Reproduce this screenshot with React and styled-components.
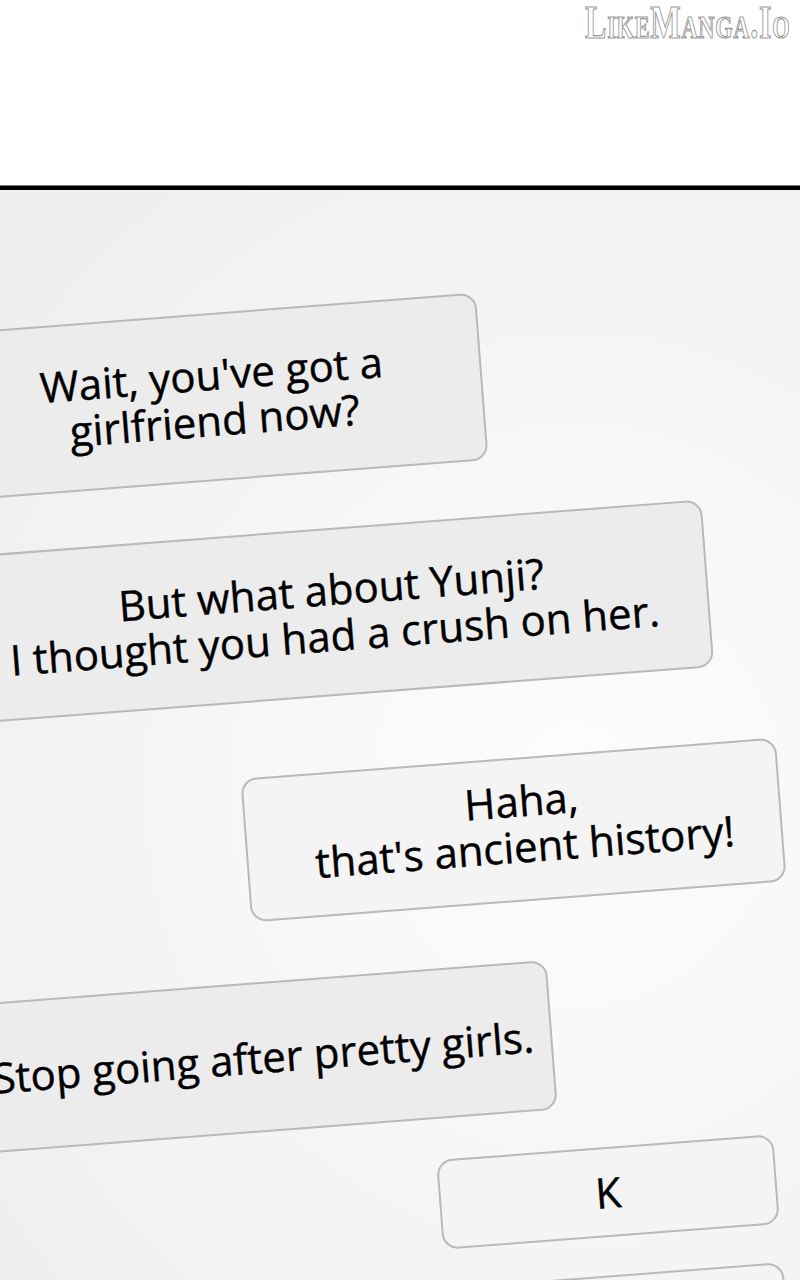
import React from "react";
import styled, { createGlobalStyle } from "styled-components";

const GlobalStyle = createGlobalStyle`
  html, body {
    margin: 0;
    padding: 0;
    background: #ffffff;
  }
  body {
    font-family: "Open Sans", "Noto Sans", sans-serif;
  }
`;

const messages = [
  { id: 1, text: ["Wait, you've got a", "girlfriend now?"], left: -57, top: 123, w: 540, h: 168, tone: "dark" },
  { id: 2, text: ["But what about Yunji?", "I thought you had a crush on her."], left: -43, top: 47, w: 752, h: 168, tone: "dark" },
  { id: 3, text: ["Haha,", "that's ancient history!"], left: 245, top: 62, w: 537, h: 144, tone: "light", shift: 20 },
  { id: 4, text: ["Stop going after pretty girls."], left: -27, top: 80, w: 580, h: 150, tone: "dark" },
  { id: 5, text: ["K"], left: 439, top: 15, w: 338, h: 90, tone: "light" },
  { id: 6, text: [""], left: 447, top: 38, w: 340, h: 90, tone: "light" },
];

const App = () => {
  return (
    <Page>
      <GlobalStyle />
      <TopBand>
        <Watermark>LikeManga.Io</Watermark>
      </TopBand>
      <Divider />
      <Panel>
        {messages.map((m) => (
          <Bubble
            key={m.id}
            $left={m.left}
            $top={m.top}
            $w={m.w}
            $h={m.h}
            $tone={m.tone}
            $shift={m.shift || 0}
          >
            {m.text.map((line, i) => (
              <Line key={i}>{line}</Line>
            ))}
          </Bubble>
        ))}
      </Panel>
    </Page>
  );
};

export default App;

const Page = styled.div`
  width: 800px;
  height: 1280px;
  overflow: hidden;
  display: flex;
  flex-direction: column;
`;

const TopBand = styled.header`
  flex: none;
  height: 185px;
  background: #ffffff;
  display: flex;
  justify-content: flex-end;
  align-items: flex-start;
  padding-right: 10px;
  box-sizing: border-box;
`;

const Watermark = styled.div`
  font-family: "Liberation Serif", "DejaVu Serif", serif;
  font-weight: 700;
  font-variant: small-caps;
  font-size: 46px;
  line-height: 44px;
  letter-spacing: 1px;
  white-space: nowrap;
  color: #ffffff;
  -webkit-text-stroke: 1.2px #9a9a9a;
  transform: scaleX(0.7);
  transform-origin: right top;
  margin-top: 1px;
`;

const Divider = styled.div`
  flex: none;
  height: 5px;
  background: #000000;
  border-top: 1px solid #777;
  box-sizing: border-box;
`;

const Panel = styled.main`
  flex: 1;
  min-height: 0;
  overflow: hidden;
  display: flex;
  flex-direction: column;
  align-items: flex-start;
  background: radial-gradient(
    ellipse 90% 70% at 72% 55%,
    #fdfdfd 0%,
    #f7f7f7 45%,
    #efefef 100%
  );
`;

const Bubble = styled.div`
  flex: none;
  box-sizing: border-box;
  width: ${(p) => p.$w}px;
  height: ${(p) => p.$h}px;
  margin-left: ${(p) => p.$left}px;
  margin-top: ${(p) => p.$top}px;
  padding-left: ${(p) => p.$shift}px;
  padding-bottom: ${(p) => (p.$shift ? 12 : 0)}px;
  border: 2px solid #b9b9b9;
  border-radius: 16px;
  background: ${(p) => (p.$tone === "dark" ? "#ececec" : "#f4f4f4")};
  transform: rotate(-4.4deg);
  display: flex;
  flex-direction: column;
  justify-content: center;
  align-items: center;
  color: #000000;
`;

const Line = styled.span`
  font-family: "Open Sans", "Noto Sans", sans-serif;
  font-size: 42px;
  font-weight: 500;
  line-height: 46px;
  white-space: nowrap;
  letter-spacing: 0;
  -webkit-text-stroke: 0.4px #000000;
`;
